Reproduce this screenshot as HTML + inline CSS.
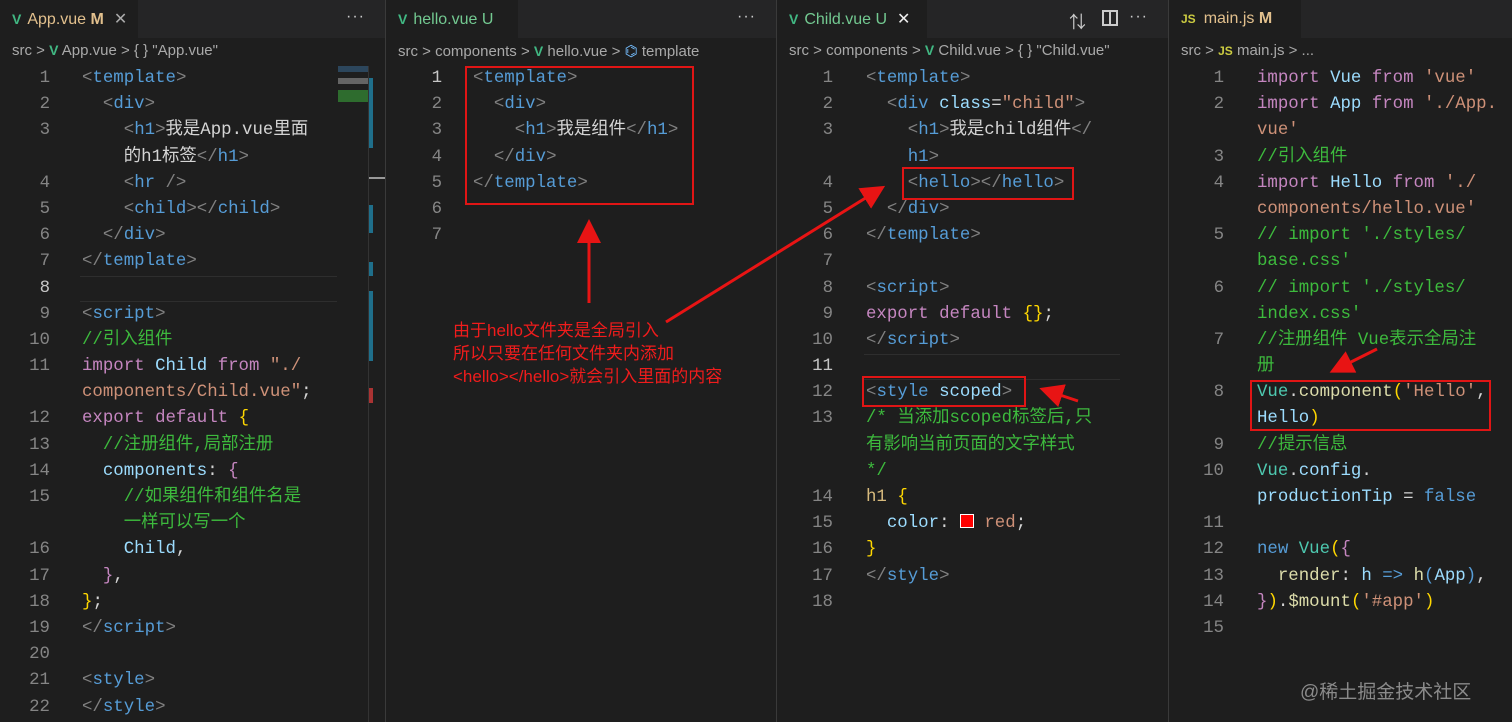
<!DOCTYPE html>
<html><head><meta charset="utf-8">
<style>
*{margin:0;padding:0;box-sizing:border-box}
body{width:1512px;height:722px;background:#1e1e1e;position:relative;overflow:hidden;font-family:"Liberation Sans","Noto Sans CJK SC",sans-serif}
.pane{position:absolute;top:0;height:722px;background:#1e1e1e;overflow:hidden}
.tabbar{position:absolute;left:0;right:0;top:0;height:38px;background:#252526}
.tab{position:absolute;left:0;top:0;height:38px;background:#1e1e1e;color:#e2c08d;font-size:16px;line-height:38px;padding-left:12px;white-space:nowrap}
.tab .v{color:#41b883;font-weight:bold;font-size:14px;margin-right:6px}
.tab .x{color:#aaa;margin-left:10px;font-size:16px}
.dots{position:absolute;right:20px;top:8px;color:#ccc;font-size:16px;letter-spacing:1px}
.bc{position:absolute;left:12px;top:42px;color:#a9a9a9;font-size:15px;white-space:nowrap}
.bc .v{color:#41b883;font-weight:bold;font-size:14px}
.lines{position:absolute;left:0;top:66px;right:0;font-family:"Liberation Mono","Noto Sans CJK SC",monospace;font-size:17.4px}
.l{height:26.2px;line-height:26.2px;position:relative;white-space:pre}
.n{position:absolute;text-align:right;width:40px;color:#858585}
.c{position:absolute;color:#d4d4d4}
.cur .n{color:#c6c6c6}
.curl{border-top:1px solid #2e2e2e;border-bottom:1px solid #2e2e2e}
.p{color:#808080}.t{color:#569cd6}.a{color:#9cdcfe}.s{color:#ce9178}.k{color:#c586c0}.cm{color:#3dba3d}.y{color:#ffd700}.f{color:#dcdcaa}.sel{color:#d7ba7d}.m{color:#c586c0}
.sep{position:absolute;top:0;width:1px;height:722px;background:#3a3a3a}
.box{position:absolute;border:2px solid #e01515}
.note{position:absolute;color:#f01c1c;font-size:17px;line-height:23px;white-space:nowrap}
</style></head><body>

<div class="pane" style="left:0;width:385px">
 <div class="tabbar"></div>
 <div class="tab" style="width:138px"><span class="v">V</span>App.vue <b>M</b><span class="x">✕</span></div>
 <div class="dots">···</div>
 <div class="bc">src &gt; <span class="v">V</span> App.vue &gt; { } "App.vue"</div>
 <div style="position:absolute;left:338px;top:66px;width:30px;height:60px;opacity:.5;background:linear-gradient(#3a6e9a 0 10%,transparent 10% 20%,#aaa 20% 30%,transparent 30% 40%,#3dba3d 40% 60%,transparent 60%)"></div>
 <div style="position:absolute;left:368px;top:78px;width:5px;height:70px;background:#1f6f8b"></div>
 <div style="position:absolute;left:368px;top:205px;width:5px;height:28px;background:#1f6f8b"></div>
 <div style="position:absolute;left:368px;top:262px;width:5px;height:14px;background:#1f6f8b"></div>
 <div style="position:absolute;left:368px;top:291px;width:5px;height:70px;background:#1f6f8b"></div>
 <div style="position:absolute;left:368px;top:388px;width:5px;height:15px;background:#a33"></div>
 <div style="position:absolute;left:368px;top:177px;width:17px;height:2px;background:#999"></div>
 <div style="position:absolute;left:368px;top:66px;width:1px;height:656px;background:#333"></div>
 <div class="lines">
  <div class="l"><span class="n" style="left:10px">1</span><span class="c" style="left:82px"><span class="p">&lt;</span><span class="t">template</span><span class="p">&gt;</span></span></div>
  <div class="l"><span class="n" style="left:10px">2</span><span class="c" style="left:82px">  <span class="p">&lt;</span><span class="t">div</span><span class="p">&gt;</span></span></div>
  <div class="l"><span class="n" style="left:10px">3</span><span class="c" style="left:82px">    <span class="p">&lt;</span><span class="t">h1</span><span class="p">&gt;</span>我是App.vue里面</span></div>
  <div class="l"><span class="c" style="left:82px">    的h1标签<span class="p">&lt;/</span><span class="t">h1</span><span class="p">&gt;</span></span></div>
  <div class="l"><span class="n" style="left:10px">4</span><span class="c" style="left:82px">    <span class="p">&lt;</span><span class="t">hr</span> <span class="p">/&gt;</span></span></div>
  <div class="l"><span class="n" style="left:10px">5</span><span class="c" style="left:82px">    <span class="p">&lt;</span><span class="t">child</span><span class="p">&gt;&lt;/</span><span class="t">child</span><span class="p">&gt;</span></span></div>
  <div class="l"><span class="n" style="left:10px">6</span><span class="c" style="left:82px">  <span class="p">&lt;/</span><span class="t">div</span><span class="p">&gt;</span></span></div>
  <div class="l"><span class="n" style="left:10px">7</span><span class="c" style="left:82px"><span class="p">&lt;/</span><span class="t">template</span><span class="p">&gt;</span></span></div>
  <div class="l cur"><div class="curl" style="position:absolute;left:80px;right:48px;top:0;height:26px"></div><span class="n" style="left:10px">8</span></div>
  <div class="l"><span class="n" style="left:10px">9</span><span class="c" style="left:82px"><span class="p">&lt;</span><span class="t">script</span><span class="p">&gt;</span></span></div>
  <div class="l"><span class="n" style="left:10px">10</span><span class="c cm" style="left:82px">//引入组件</span></div>
  <div class="l"><span class="n" style="left:10px">11</span><span class="c" style="left:82px"><span class="k">import</span> <span class="a">Child</span> <span class="k">from</span> <span class="s">"./</span></span></div>
  <div class="l"><span class="c" style="left:82px"><span class="s">components/Child.vue"</span>;</span></div>
  <div class="l"><span class="n" style="left:10px">12</span><span class="c" style="left:82px"><span class="k">export</span> <span class="k">default</span> <span class="y">{</span></span></div>
  <div class="l"><span class="n" style="left:10px">13</span><span class="c cm" style="left:82px">  //注册组件,局部注册</span></div>
  <div class="l"><span class="n" style="left:10px">14</span><span class="c" style="left:82px">  <span class="a">components</span>: <span class="m">{</span></span></div>
  <div class="l"><span class="n" style="left:10px">15</span><span class="c cm" style="left:82px">    //如果组件和组件名是</span></div>
  <div class="l"><span class="c cm" style="left:82px">    一样可以写一个</span></div>
  <div class="l"><span class="n" style="left:10px">16</span><span class="c" style="left:82px">    <span class="a">Child</span>,</span></div>
  <div class="l"><span class="n" style="left:10px">17</span><span class="c" style="left:82px">  <span class="m">}</span>,</span></div>
  <div class="l"><span class="n" style="left:10px">18</span><span class="c" style="left:82px"><span class="y">}</span>;</span></div>
  <div class="l"><span class="n" style="left:10px">19</span><span class="c" style="left:82px"><span class="p">&lt;/</span><span class="t">script</span><span class="p">&gt;</span></span></div>
  <div class="l"><span class="n" style="left:10px">20</span></div>
  <div class="l"><span class="n" style="left:10px">21</span><span class="c" style="left:82px"><span class="p">&lt;</span><span class="t">style</span><span class="p">&gt;</span></span></div>
  <div class="l"><span class="n" style="left:10px">22</span><span class="c" style="left:82px"><span class="p">&lt;/</span><span class="t">style</span><span class="p">&gt;</span></span></div>
 </div>
</div>
<div class="sep" style="left:385px"></div>

<div class="pane" style="left:386px;width:390px">
 <div class="tabbar"></div>
 <div class="tab" style="width:132px;color:#73c991"><span class="v">V</span>hello.vue U</div>
 <div class="dots">···</div>
 <div class="bc">src &gt; components &gt; <span class="v">V</span> hello.vue &gt; <span style="color:#75beff">⌬</span> template</div>
 <div class="lines">
  <div class="l cur"><span class="n" style="left:16px">1</span><span class="c" style="left:87px"><span class="p">&lt;</span><span class="t">template</span><span class="p">&gt;</span></span></div>
  <div class="l"><span class="n" style="left:16px">2</span><span class="c" style="left:87px">  <span class="p">&lt;</span><span class="t">div</span><span class="p">&gt;</span></span></div>
  <div class="l"><span class="n" style="left:16px">3</span><span class="c" style="left:87px">    <span class="p">&lt;</span><span class="t">h1</span><span class="p">&gt;</span>我是组件<span class="p">&lt;/</span><span class="t">h1</span><span class="p">&gt;</span></span></div>
  <div class="l"><span class="n" style="left:16px">4</span><span class="c" style="left:87px">  <span class="p">&lt;/</span><span class="t">div</span><span class="p">&gt;</span></span></div>
  <div class="l"><span class="n" style="left:16px">5</span><span class="c" style="left:87px"><span class="p">&lt;/</span><span class="t">template</span><span class="p">&gt;</span></span></div>
  <div class="l"><span class="n" style="left:16px">6</span></div>
  <div class="l"><span class="n" style="left:16px">7</span></div>
 </div>
 <div class="note" style="left:67px;top:319px">由于hello文件夹是全局引入<br>所以只要在任何文件夹内添加<br>&lt;hello&gt;&lt;/hello&gt;就会引入里面的内容</div>
</div>
<div class="sep" style="left:776px"></div>

<div class="pane" style="left:777px;width:391px">
 <div class="tabbar"></div>
 <div class="tab" style="width:150px;color:#73c991"><span class="v">V</span>Child.vue U<span class="x" style="color:#eee">✕</span></div>
 <div style="position:absolute;left:292px;top:8px;color:#ccc;font-size:17px">⇅</div>
 <div style="position:absolute;left:325px;top:10px;width:16px;height:16px;border:2px solid #ccc"><div style="position:absolute;left:5px;top:0;width:2px;height:12px;background:#ccc"></div></div>
 <div class="dots">···</div>
 <div class="bc">src &gt; components &gt; <span class="v">V</span> Child.vue &gt; { } "Child.vue"</div>
 <div class="lines">
  <div class="l"><span class="n" style="left:16px">1</span><span class="c" style="left:89px"><span class="p">&lt;</span><span class="t">template</span><span class="p">&gt;</span></span></div>
  <div class="l"><span class="n" style="left:16px">2</span><span class="c" style="left:89px">  <span class="p">&lt;</span><span class="t">div</span> <span class="a">class</span>=<span class="s">"child"</span><span class="p">&gt;</span></span></div>
  <div class="l"><span class="n" style="left:16px">3</span><span class="c" style="left:89px">    <span class="p">&lt;</span><span class="t">h1</span><span class="p">&gt;</span>我是child组件<span class="p">&lt;/</span></span></div>
  <div class="l"><span class="c" style="left:89px">    <span class="t">h1</span><span class="p">&gt;</span></span></div>
  <div class="l"><span class="n" style="left:16px">4</span><span class="c" style="left:89px">    <span class="p">&lt;</span><span class="t">hello</span><span class="p">&gt;&lt;/</span><span class="t">hello</span><span class="p">&gt;</span></span></div>
  <div class="l"><span class="n" style="left:16px">5</span><span class="c" style="left:89px">  <span class="p">&lt;/</span><span class="t">div</span><span class="p">&gt;</span></span></div>
  <div class="l"><span class="n" style="left:16px">6</span><span class="c" style="left:89px"><span class="p">&lt;/</span><span class="t">template</span><span class="p">&gt;</span></span></div>
  <div class="l"><span class="n" style="left:16px">7</span></div>
  <div class="l"><span class="n" style="left:16px">8</span><span class="c" style="left:89px"><span class="p">&lt;</span><span class="t">script</span><span class="p">&gt;</span></span></div>
  <div class="l"><span class="n" style="left:16px">9</span><span class="c" style="left:89px"><span class="k">export</span> <span class="k">default</span> <span class="y">{}</span>;</span></div>
  <div class="l"><span class="n" style="left:16px">10</span><span class="c" style="left:89px"><span class="p">&lt;/</span><span class="t">script</span><span class="p">&gt;</span></span></div>
  <div class="l cur"><div class="curl" style="position:absolute;left:87px;right:48px;top:0;height:26px"></div><span class="n" style="left:16px">11</span></div>
  <div class="l"><span class="n" style="left:16px">12</span><span class="c" style="left:89px"><span class="p">&lt;</span><span class="t">style</span> <span class="a">scoped</span><span class="p">&gt;</span></span></div>
  <div class="l"><span class="n" style="left:16px">13</span><span class="c cm" style="left:89px">/* 当添加scoped标签后,只</span></div>
  <div class="l"><span class="c cm" style="left:89px">有影响当前页面的文字样式</span></div>
  <div class="l"><span class="c cm" style="left:89px">*/</span></div>
  <div class="l"><span class="n" style="left:16px">14</span><span class="c" style="left:89px"><span class="sel">h1</span> <span class="y">{</span></span></div>
  <div class="l"><span class="n" style="left:16px">15</span><span class="c" style="left:89px">  <span class="a">color</span>: <span style="display:inline-block;width:14px;height:14px;background:#f00;border:1px solid #fff;vertical-align:-1px"></span> <span class="s">red</span>;</span></div>
  <div class="l"><span class="n" style="left:16px">16</span><span class="c" style="left:89px"><span class="y">}</span></span></div>
  <div class="l"><span class="n" style="left:16px">17</span><span class="c" style="left:89px"><span class="p">&lt;/</span><span class="t">style</span><span class="p">&gt;</span></span></div>
  <div class="l"><span class="n" style="left:16px">18</span></div>
 </div>
</div>
<div class="sep" style="left:1168px"></div>

<div class="pane" style="left:1169px;width:343px">
 <div class="tabbar"></div>
 <div class="tab" style="width:132px"><span style="color:#cbcb41;font-weight:bold;font-size:12px;margin-right:8px">JS</span>main.js <b>M</b></div>
 <div class="bc">src &gt; <span style="color:#cbcb41;font-weight:bold;font-size:12px">JS</span> main.js &gt; ...</div>
 <div class="lines">
  <div class="l"><span class="n" style="left:15px">1</span><span class="c" style="left:88px"><span class="k">import</span> <span class="a">Vue</span> <span class="k">from</span> <span class="s">'vue'</span></span></div>
  <div class="l"><span class="n" style="left:15px">2</span><span class="c" style="left:88px"><span class="k">import</span> <span class="a">App</span> <span class="k">from</span> <span class="s">'./App.</span></span></div>
  <div class="l"><span class="c" style="left:88px"><span class="s">vue'</span></span></div>
  <div class="l"><span class="n" style="left:15px">3</span><span class="c cm" style="left:88px">//引入组件</span></div>
  <div class="l"><span class="n" style="left:15px">4</span><span class="c" style="left:88px"><span class="k">import</span> <span class="a">Hello</span> <span class="k">from</span> <span class="s">'./</span></span></div>
  <div class="l"><span class="c" style="left:88px"><span class="s">components/hello.vue'</span></span></div>
  <div class="l"><span class="n" style="left:15px">5</span><span class="c cm" style="left:88px">// import './styles/</span></div>
  <div class="l"><span class="c cm" style="left:88px">base.css'</span></div>
  <div class="l"><span class="n" style="left:15px">6</span><span class="c cm" style="left:88px">// import './styles/</span></div>
  <div class="l"><span class="c cm" style="left:88px">index.css'</span></div>
  <div class="l"><span class="n" style="left:15px">7</span><span class="c cm" style="left:88px">//注册组件 Vue表示全局注</span></div>
  <div class="l"><span class="c cm" style="left:88px">册</span></div>
  <div class="l"><span class="n" style="left:15px">8</span><span class="c" style="left:88px"><span style="color:#4ec9b0">Vue</span>.<span class="f">component</span><span class="y">(</span><span class="s">'Hello'</span>,</span></div>
  <div class="l"><span class="c" style="left:88px"><span class="a">Hello</span><span class="y">)</span></span></div>
  <div class="l"><span class="n" style="left:15px">9</span><span class="c cm" style="left:88px">//提示信息</span></div>
  <div class="l"><span class="n" style="left:15px">10</span><span class="c" style="left:88px"><span style="color:#4ec9b0">Vue</span>.<span class="a">config</span>.</span></div>
  <div class="l"><span class="c" style="left:88px"><span class="a">productionTip</span> = <span class="t">false</span></span></div>
  <div class="l"><span class="n" style="left:15px">11</span></div>
  <div class="l"><span class="n" style="left:15px">12</span><span class="c" style="left:88px"><span class="t">new</span> <span style="color:#4ec9b0">Vue</span><span class="y">(</span><span class="m">{</span></span></div>
  <div class="l"><span class="n" style="left:15px">13</span><span class="c" style="left:88px">  <span class="f">render</span>: <span class="a">h</span> <span class="t">=&gt;</span> <span class="f">h</span><span class="t">(</span><span class="a">App</span><span class="t">)</span>,</span></div>
  <div class="l"><span class="n" style="left:15px">14</span><span class="c" style="left:88px"><span class="m">}</span><span class="y">)</span>.<span class="f">$mount</span><span class="y">(</span><span class="s">'#app'</span><span class="y">)</span></span></div>
  <div class="l"><span class="n" style="left:15px">15</span></div>
 </div>
 <div style="position:absolute;left:131px;top:677px;color:#8a8a8a;font-size:19px">@稀土掘金技术社区</div>
</div>

<div class="box" style="left:465px;top:66px;width:229px;height:139px"></div>
<div class="box" style="left:902px;top:167px;width:172px;height:33px"></div>
<div class="box" style="left:862px;top:376px;width:164px;height:31px"></div>
<div class="box" style="left:1250px;top:380px;width:241px;height:51px"></div>
<svg style="position:absolute;left:0;top:0" width="1512" height="722">
 <defs><marker id="ah" markerWidth="8" markerHeight="8" refX="6" refY="4" orient="auto" markerUnits="strokeWidth"><path d="M0,0 L8,4 L0,8 z" fill="#e81414"/></marker></defs>
 <g stroke="#e81414" stroke-width="3" fill="none">
  <line x1="589" y1="303" x2="589" y2="225" marker-end="url(#ah)"/>
  <line x1="666" y1="322" x2="880" y2="189" marker-end="url(#ah)"/>
  <line x1="1078" y1="401" x2="1045" y2="390" marker-end="url(#ah)"/>
  <line x1="1377" y1="349" x2="1335" y2="370" marker-end="url(#ah)"/>
 </g>
</svg>
</body></html>
